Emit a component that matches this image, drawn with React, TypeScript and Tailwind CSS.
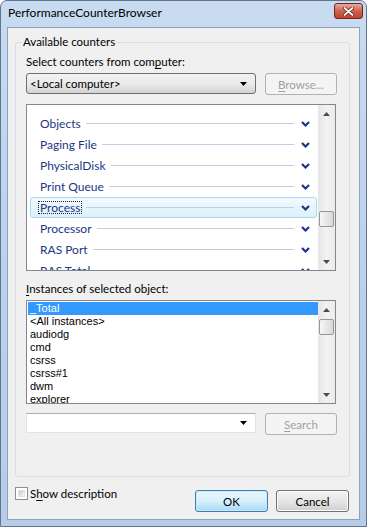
import React from "react";

const Chevron = () => (
  <svg width="9" height="6" viewBox="0 0 9 6" className="block">
    <path d="M1 1 L4.5 4.5 L8 1" fill="none" stroke="#1c3584" strokeWidth="2.2" />
  </svg>
);

const ArrowUp = () => (
  <svg width="7" height="4" viewBox="0 0 7 4" className="block">
    <path d="M0 4 L3.5 0 L7 4 Z" fill="#4d4d4d" />
  </svg>
);

const ArrowDown = () => (
  <svg width="7" height="4" viewBox="0 0 7 4" className="block">
    <path d="M0 0 L3.5 4 L7 0 Z" fill="#4d4d4d" />
  </svg>
);

const ComboArrow = () => (
  <svg width="7" height="4" viewBox="0 0 7 4" className="block">
    <path d="M0 0 L3.5 4 L7 0 Z" fill="#000" />
  </svg>
);

const Thumb = ({ mt }: { mt: string }) => (
  <div className={`${mt} mx-[1px] h-[16px] border border-[#979797] rounded-[2px] bg-gradient-to-r from-[#f6f6f6] to-[#d9d9d9]`} />
);

export default function App() {
  const counters = ["Objects", "Paging File", "PhysicalDisk", "Print Queue", "Process", "Processor", "RAS Port", "RAS Total"];
  const instances = ["_Total", "<All instances>", "audiodg", "cmd", "csrss", "csrss#1", "dwm", "explorer"];
  return (
    <div className="w-[367px] h-[527px] flex flex-col bg-gradient-to-b from-[#c8dbf1] via-[#bcd2eb] to-[#b7cde7] border border-[#5f7590] rounded-t-[7px] font-['Lato',sans-serif] text-[11.5px] text-black overflow-hidden">
      {/* Title bar */}
      <div className="h-[26px] flex items-start justify-between shrink-0">
        <span className="pl-[7px] pt-[3px] leading-[17px] text-[12px] text-[#000]">PerformanceCounterBrowser</span>
        <div className="mt-[2px] mr-[3px] w-[29px] h-[16px] rounded-[3px] border border-[#6b2a20] bg-gradient-to-b from-[#e9a99b] via-[#d0614c] to-[#c2412a] flex items-center justify-center">
          <svg width="11" height="9" viewBox="0 0 11 9" className="block">
            <path d="M1.5 1 L9.5 8 M9.5 1 L1.5 8" stroke="#5a1a10" strokeWidth="3.2" strokeLinecap="round" />
            <path d="M1.5 1 L9.5 8 M9.5 1 L1.5 8" stroke="#ffffff" strokeWidth="1.8" strokeLinecap="round" />
          </svg>
        </div>
      </div>

      {/* Client area */}
      <div className="flex-1 mx-[6px] mb-[6px] bg-[#f0f0f0] border border-[#8da2bb] flex flex-col">
        {/* Group box */}
        <div className="relative ml-[7px] mt-[14px] w-[335px] h-[435px] border border-[#d5dfe5] rounded-[3px] pl-[10px] pt-[11px] flex flex-col">
          <span className="absolute left-[6px] top-[-9px] px-[1px] bg-[#f0f0f0] leading-[16px]">Available counters</span>

          <div className="leading-[15px]">
            Select counters from com<span className="underline underline-offset-2">p</span>uter:
          </div>

          <div className="mt-[4px] flex items-start">
            <div className="w-[230px] h-[21px] border border-[#707070] rounded-[3px] bg-gradient-to-b from-[#f2f2f2] via-[#ebebeb] to-[#d3d3d3] flex items-center pl-[3px] pr-[8px]">
              <span className="flex-1 leading-[15px]">&lt;Local computer&gt;</span>
              <ComboArrow />
            </div>
            <div className="ml-[9px] w-[72px] h-[22px] border border-[#adb2b5] rounded-[3px] bg-[#f4f4f4] flex items-center justify-center text-[#a0a0a0] leading-[15px]">
              <span><span className="underline underline-offset-2">B</span>rowse...</span>
            </div>
          </div>

          {/* Counter list */}
          <div className="mt-[9px] w-[310px] h-[167px] border border-[#828790] bg-white flex text-[12px]">
            <div className="flex-1 overflow-hidden pt-[8px] pl-[3px] pr-[1px]">
              {counters.map((c) =>
                c === "Process" ? (
                  <div key={c} className="h-[21px] flex items-center pl-[9px] pr-[6px] border border-[#a7d9f5] rounded-[3px] bg-gradient-to-b from-[#f3fafe] to-[#dcf0fb] text-[#1c3584]">
                    <span className="border border-dotted border-[#222] -ml-[2px] px-[1px] leading-[11px]">{c}</span>
                    <div className="flex-1 h-px bg-[#c3cde0] ml-[4px] mr-[7px]" />
                    <Chevron />
                  </div>
                ) : (
                  <div key={c} className="h-[21px] flex items-center pl-[10px] pr-[7px] text-[#1c3584]">
                    <span className="leading-[15px]">{c}</span>
                    <div className="flex-1 h-px bg-[#c3cde0] ml-[5px] mr-[7px]" />
                    <Chevron />
                  </div>
                )
              )}
            </div>
            <div className="w-[17px] bg-gradient-to-r from-[#e6e6e6] via-[#f2f2f2] to-[#ececec] flex flex-col">
              <div className="h-[17px] flex items-center justify-center"><ArrowUp /></div>
              <Thumb mt="mt-[89px]" />
              <div className="mt-auto h-[17px] flex items-center justify-center"><ArrowDown /></div>
            </div>
          </div>

          <div className="mt-[10px] leading-[15px]">
            <span className="underline underline-offset-2">I</span>nstances of selected object:
          </div>

          {/* Instances list */}
          <div className="mt-[4px] w-[310px] h-[104px] border border-[#828790] bg-white flex font-['Liberation_Sans',sans-serif] text-[11px]">
            <div className="flex-1 overflow-hidden pt-[1px] pl-[1px]">
              {instances.map((i, idx) => (
                <div key={i} className={`h-[13px] leading-[13px] pl-[2px] whitespace-pre ${idx === 0 ? "bg-[#3399ff] text-white" : "text-black"}`}>
                  {i}
                </div>
              ))}
            </div>
            <div className="w-[17px] bg-gradient-to-r from-[#e6e6e6] via-[#f2f2f2] to-[#ececec] flex flex-col">
              <div className="h-[17px] flex items-center justify-center"><ArrowUp /></div>
              <Thumb mt="mt-[1px]" />
              <div className="mt-auto h-[17px] flex items-center justify-center"><ArrowDown /></div>
            </div>
          </div>

          <div className="mt-[9px] flex items-start">
            <div className="w-[230px] h-[20px] border border-[#e2e3ea] border-t-[#abadb3] bg-white flex items-center justify-end pr-[8px]">
              <ComboArrow />
            </div>
            <div className="ml-[9px] w-[72px] h-[22px] border border-[#adb2b5] rounded-[3px] bg-[#f4f4f4] flex items-center justify-center text-[#a0a0a0] leading-[15px]">
              <span><span className="underline underline-offset-2">S</span>earch</span>
            </div>
          </div>
        </div>

        {/* Bottom row */}
        <div className="flex items-start pl-[7px] pr-[10px]">
          <div className="mt-[9px] flex items-center h-[15px]">
            <div className="w-[13px] h-[13px] border border-[#8e8f8f] bg-white p-[2px]">
              <div className="w-full h-full bg-gradient-to-br from-[#cbcbcb] to-[#f6f6f6] border border-[#e0e0e0]" />
            </div>
            <span className="ml-[2px] leading-[15px]">S<span className="underline underline-offset-2">h</span>ow description</span>
          </div>
          <div className="ml-auto mt-[13px] flex gap-[8px]">
            <div className="w-[73px] h-[22px] border border-[#3c7fb1] rounded-[3px] bg-gradient-to-b from-[#eaf6fd] via-[#d9f0fc] to-[#a7d9f5] shadow-[inset_0_0_0_1px_#cbe9fb] flex items-center justify-center leading-[15px]">
              OK
            </div>
            <div className="w-[73px] h-[22px] border border-[#707070] rounded-[3px] bg-gradient-to-b from-[#f2f2f2] via-[#e6e6e6] to-[#cfcfcf] shadow-[inset_0_0_0_1px_#fcfcfc] flex items-center justify-center leading-[15px]">
              Cancel
            </div>
          </div>
        </div>
      </div>
    </div>
  );
}
